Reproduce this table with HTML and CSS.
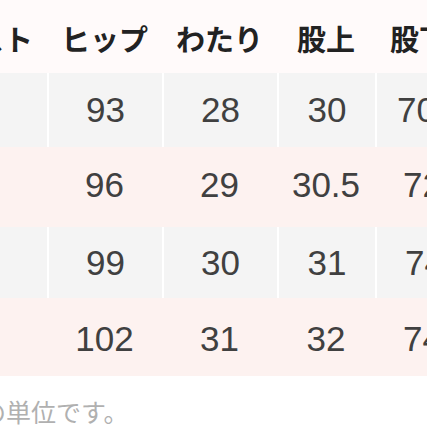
FILE: index.html
```html
<!DOCTYPE html>
<html lang="ja">
<head>
<meta charset="utf-8">
<link rel="stylesheet" href="styles.css">
</head>
<body>
<div class="page">
  <div class="table">
    <div class="row head">
      <div class="cell first">ウエスト</div>
      <div class="cell">ヒップ</div>
      <div class="cell">わたり</div>
      <div class="cell">股上</div>
      <div class="cell last">股下</div>
    </div>
    <div class="row grey r1">
      <div class="cell first"></div>
      <div class="cell">93</div>
      <div class="cell">28</div>
      <div class="cell">30</div>
      <div class="cell last">70</div>
    </div>
    <div class="row pink r2">
      <div class="cell first"></div>
      <div class="cell">96</div>
      <div class="cell">29</div>
      <div class="cell">30.5</div>
      <div class="cell last">72</div>
    </div>
    <div class="row grey r3">
      <div class="cell first"></div>
      <div class="cell">99</div>
      <div class="cell">30</div>
      <div class="cell">31</div>
      <div class="cell last">74</div>
    </div>
    <div class="row pink r4">
      <div class="cell first"></div>
      <div class="cell">102</div>
      <div class="cell">31</div>
      <div class="cell">32</div>
      <div class="cell last">74</div>
    </div>
  </div>
  <p class="note">の単位です。</p>
</div>
</body>
</html>
```

FILE: styles.css
```css
html, body {
  margin: 0;
  padding: 0;
  background: #ffffff;
}

.page {
  width: 427px;
  height: 427px;
  overflow: hidden;
  background: #ffffff;
}

.table {
  display: flex;
  flex-direction: column;
  width: 480px;
}

.row {
  display: grid;
  grid-template-columns: 47px 115px 115px 98px 105px;
  align-items: stretch;
}

.cell {
  display: flex;
  align-items: center;
  justify-content: center;
  white-space: nowrap;
  font-family: "Liberation Sans", "Noto Sans CJK JP", sans-serif;
  font-size: 35px;
  color: #404040;
  box-sizing: border-box;
}

.head {
  height: 73px;
  background: #fffafa;
}

.head .cell {
  font-family: "Noto Sans CJK JP", sans-serif;
  font-weight: 700;
  font-size: 29px;
  color: #222222;
  padding-top: 2px;
}

.head .first {
  justify-content: flex-end;
  padding-right: 14px;
}

.head .last {
  justify-content: flex-start;
  padding-left: 15px;
}

.row .last {
  justify-content: flex-start;
}

.r1 .last { padding-left: 20px; }
.r2 .last, .r3 .last, .r4 .last { padding-left: 28px; }

.grey .cell {
  background: #f4f4f4;
  border-left: 2px solid #ffffff;
}

.grey .first {
  border-left: none;
}

.pink .cell {
  background: #fdf2f0;
}

.r1 { height: 74px; }
.r2 { height: 80px; }
.r3 { height: 71px; }
.r4 { height: 78px; }

.r2 .cell { padding-bottom: 4px; }
.r4 .cell { padding-top: 4px; }

.note {
  margin: 20px 0 0 -19px;
  font-family: "Noto Sans CJK JP", sans-serif;
  font-size: 25px;
  line-height: 30px;
  color: #b0b0b0;
  white-space: nowrap;
}
```
